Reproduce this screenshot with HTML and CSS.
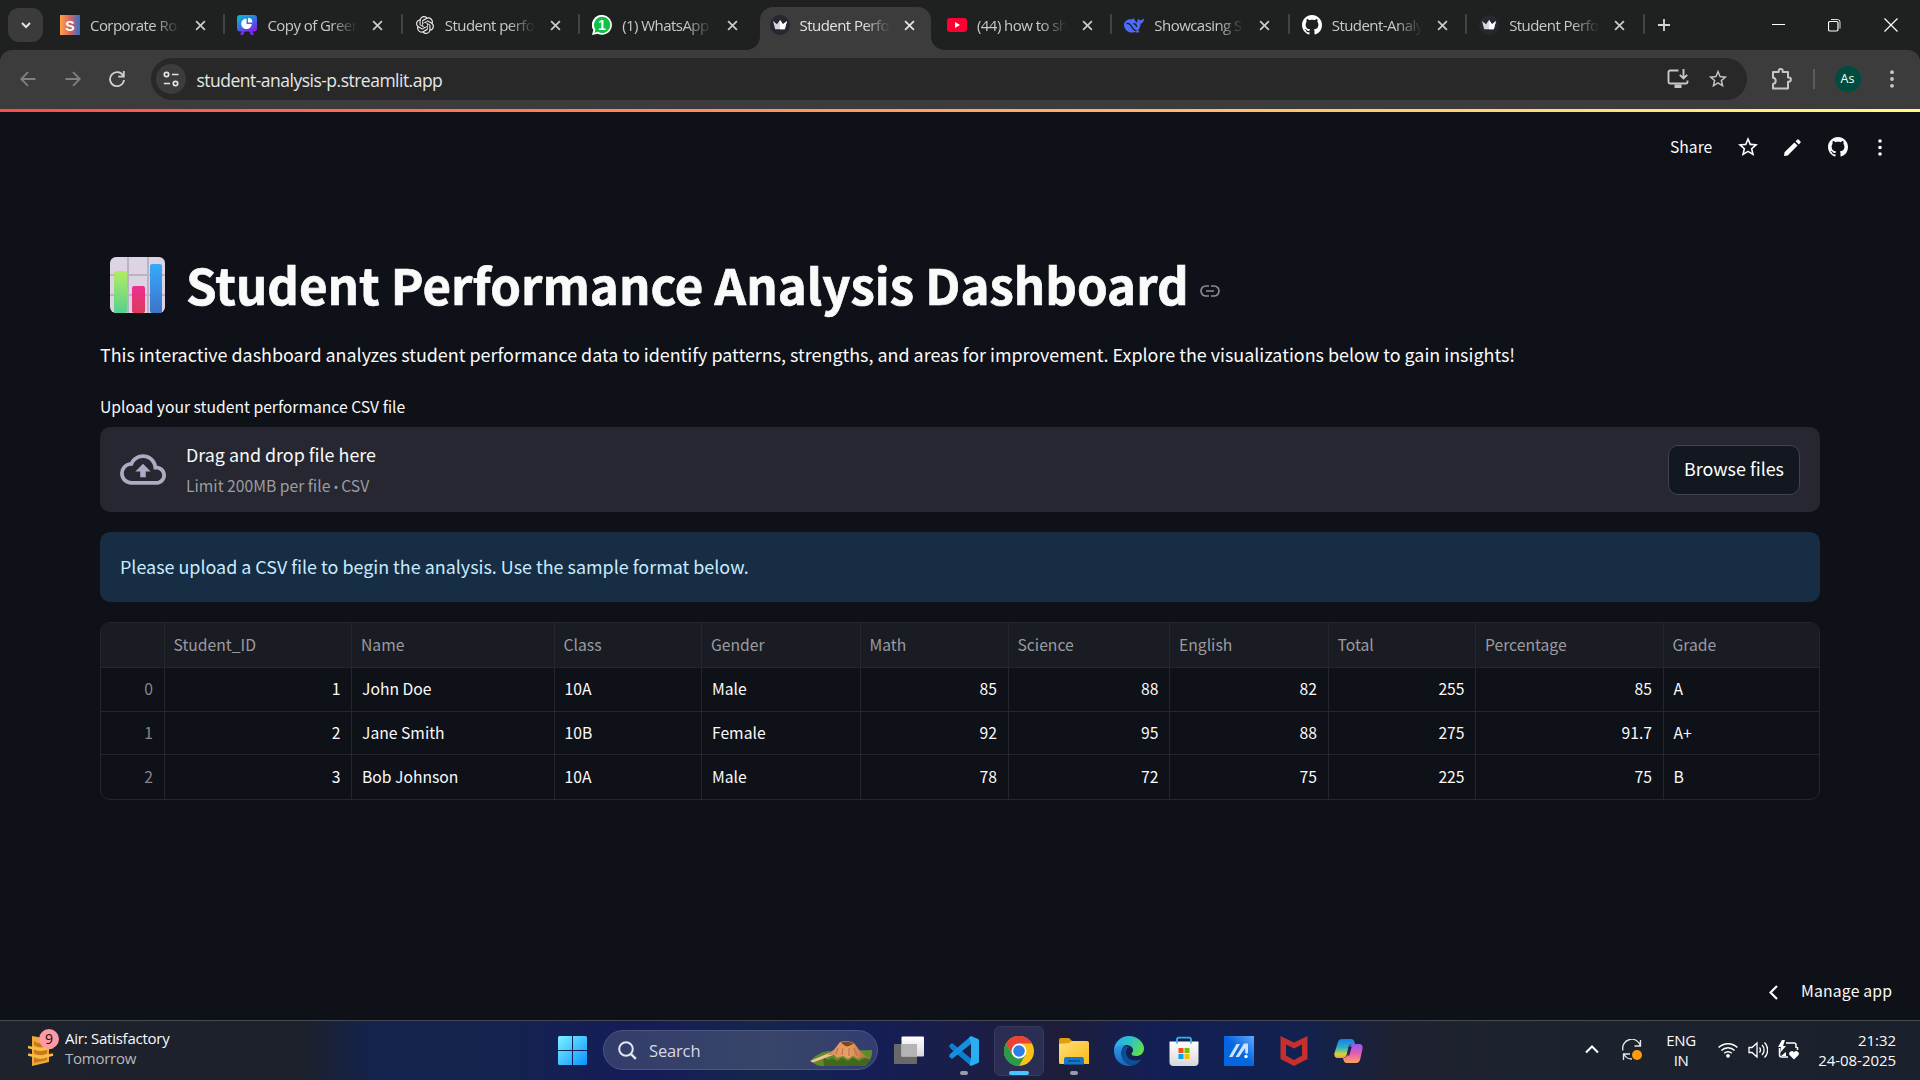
FILE: index.html
```html
<!DOCTYPE html>
<html lang="en">
<head>
<meta charset="utf-8">
<title>Student Performance Analysis Dashboard</title>
<link rel="stylesheet" href="styles.css">
</head>
<body>
<svg class="defs" aria-hidden="true">
  <defs>
    <linearGradient id="g-s" x1="0" x2="1"><stop offset="0" stop-color="#ffa14a"/><stop offset=".5" stop-color="#d9665c"/><stop offset="1" stop-color="#2e6fd0"/></linearGradient>
    <linearGradient id="g-board" x1="0" x2=".6" y1="0" y2="1"><stop offset="0" stop-color="#00c4cc"/><stop offset=".5" stop-color="#2a7fe0"/><stop offset="1" stop-color="#7d2ae8"/></linearGradient>
    <linearGradient id="g-win" x1="0" x2="1" y1="0" y2="1"><stop offset="0" stop-color="#7cf3ff"/><stop offset="1" stop-color="#0a93ff"/></linearGradient>
    <linearGradient id="g-folder" x1="0" x2="1" y1="0" y2="1"><stop offset="0" stop-color="#ffe07a"/><stop offset="1" stop-color="#fdb913"/></linearGradient>
    <linearGradient id="g-edge" x1="0" x2="1" y1=".2" y2=".6"><stop offset="0" stop-color="#2ba8ee"/><stop offset=".5" stop-color="#2cc4c6"/><stop offset="1" stop-color="#62e04a"/></linearGradient>
    <linearGradient id="g-edge2" x1="0" x2="0" y1="0" y2="1"><stop offset="0" stop-color="#2f9ce6"/><stop offset="1" stop-color="#1565c0"/></linearGradient>
    <linearGradient id="g-store" x1="0" x2="0" y1="0" y2="1"><stop offset="0" stop-color="#fff"/><stop offset="1" stop-color="#d8d8da"/></linearGradient>
    <linearGradient id="g-asus" x1="0" x2="1" y1="1" y2="0"><stop offset=".5" stop-color="#0566e0"/><stop offset="1" stop-color="#62a8ff"/></linearGradient>
    <linearGradient id="g-cp1" x1="0" x2="0" y1="0" y2="1"><stop offset="0" stop-color="#1c7be8"/><stop offset=".45" stop-color="#26b3c9"/><stop offset=".8" stop-color="#d8d03a"/><stop offset="1" stop-color="#f0a12c"/></linearGradient>
    <linearGradient id="g-cp2" x1="0" x2="0" y1="0" y2="1"><stop offset="0" stop-color="#8d5cf0"/><stop offset=".5" stop-color="#e45cb4"/><stop offset="1" stop-color="#ffa25c"/></linearGradient>
    <linearGradient id="g-green" x1="0" x2="0" y1="0" y2="1"><stop offset="0" stop-color="#b3ec60"/><stop offset="1" stop-color="#55d191"/></linearGradient>
    <linearGradient id="g-pink" x1="0" x2="0" y1="0" y2="1"><stop offset="0" stop-color="#ee2f92"/><stop offset="1" stop-color="#dc3a5c"/></linearGradient>
    <linearGradient id="g-blue" x1="0" x2="0" y1="0" y2="1"><stop offset="0" stop-color="#36aafb"/><stop offset="1" stop-color="#3c74c8"/></linearGradient>
    <linearGradient id="g-rock" x1="0" x2="1"><stop offset="0" stop-color="#d98e5a"/><stop offset=".5" stop-color="#e8a068"/><stop offset="1" stop-color="#b8683a"/></linearGradient>
    <linearGradient id="g-tv" x1="0" x2="0" y1="0" y2="1"><stop offset="0" stop-color="#fff"/><stop offset="1" stop-color="#d9d9dd"/></linearGradient>
  </defs>
  <symbol id="x" viewBox="0 0 10 10"><path d="M1 1l8 8M9 1L1 9" fill="none" stroke="currentColor" stroke-width="1.6"/></symbol>
  <symbol id="github" viewBox="0 0 16 16"><path fill="currentColor" d="M8 0C3.58 0 0 3.58 0 8c0 3.54 2.29 6.53 5.47 7.59.4.07.55-.17.55-.38 0-.19-.01-.82-.01-1.49-2.01.37-2.53-.49-2.69-.94-.09-.23-.48-.94-.82-1.13-.28-.15-.68-.52-.01-.53.63-.01 1.08.58 1.23.82.72 1.21 1.87.87 2.33.66.07-.52.28-.87.51-1.07-1.78-.2-3.64-.89-3.64-3.95 0-.87.31-1.59.82-2.15-.08-.2-.36-1.02.08-2.12 0 0 .67-.21 2.2.82.64-.18 1.32-.27 2-.27s1.36.09 2 .27c1.53-1.04 2.2-.82 2.2-.82.44 1.1.16 1.92.08 2.12.51.56.82 1.27.82 2.15 0 3.07-1.87 3.75-3.65 3.95.29.25.54.73.54 1.48 0 1.07-.01 1.93-.01 2.2 0 .21.15.46.55.38A8.01 8.01 0 0 0 16 8c0-4.42-3.58-8-8-8z"/></symbol>
  <symbol id="crown" viewBox="0 0 20 20"><circle cx="10" cy="10" r="10" fill="#262730"/><path d="M3 6l4 3.2 3-4.2 3 4.2L17 6l-2.2 8.2H5.2z" fill="#d5d5da"/><path d="M10 5l3 4.2L17 6l-2.2 8.2H10z" fill="#fff"/></symbol>
  <symbol id="star" viewBox="0 0 24 24"><path fill="currentColor" d="M22 9.24l-7.19-.62L12 2 9.19 8.63 2 9.24l5.46 4.73L5.82 21 12 17.27 18.18 21l-1.63-7.03L22 9.24zM12 15.4l-3.76 2.27 1-4.28-3.32-2.88 4.38-.38L12 6.1l1.71 4.04 4.38.38-3.32 2.88 1 4.28L12 15.4z"/></symbol>
  <symbol id="dots" viewBox="0 0 4 18"><g fill="currentColor"><circle cx="2" cy="2.2" r="1.9"/><circle cx="2" cy="9" r="1.9"/><circle cx="2" cy="15.8" r="1.9"/></g></symbol>
</svg>

<div class="browser">
  <div class="tabstrip">
    <div class="tab-search"><svg width="10" height="7" viewBox="0 0 10 7"><path d="M1 1l4 4 4-4" fill="none" stroke="#e3e3e3" stroke-width="2"/></svg></div>
    <div class="tabs">
      <div class="tab"><svg class="fav" viewBox="0 0 20 20"><rect width="20" height="20" fill="url(#g-s)"/><text x="10" y="15.5" text-anchor="middle" class="fav-s">S</text></svg><span>Corporate Ro</span><svg class="close"><use href="#x"/></svg></div>
      <div class="tab"><svg class="fav" viewBox="0 0 20 20"><path d="M7 14l-2.500 6M13 14l2.500 6" stroke="#7d2ae8" stroke-width="3"/><rect width="20" height="16.5" rx="3" fill="url(#g-board)"/><path d="M9.500 3.500a5.300 5.300 0 1 0 5.300 5.500H9.500z" fill="#fff"/><path d="M11 2.800a4.800 4.800 0 0 1 4.400 4.700H11z" fill="#fff"/></svg><span>Copy of Green</span><svg class="close"><use href="#x"/></svg></div>
      <div class="tab"><svg class="fav openai" viewBox="0 0 24 24"><path fill="#e8e8e8" d="M22.2819 9.8211a5.9847 5.9847 0 0 0-.5157-4.9108 6.0462 6.0462 0 0 0-6.5098-2.9A6.0651 6.0651 0 0 0 4.9807 4.1818a5.9847 5.9847 0 0 0-3.9977 2.9 6.0462 6.0462 0 0 0 .7427 7.0966 5.98 5.98 0 0 0 .511 4.9107 6.051 6.051 0 0 0 6.5146 2.9001A5.9847 5.9847 0 0 0 13.2599 24a6.0557 6.0557 0 0 0 5.7718-4.2058 5.9894 5.9894 0 0 0 3.9977-2.9001 6.0557 6.0557 0 0 0-.7475-7.0729zm-9.022 12.6081a4.4755 4.4755 0 0 1-2.8764-1.0408l.1419-.0804 4.7783-2.7582a.7948.7948 0 0 0 .3927-.6813v-6.7369l2.02 1.1686a.071.071 0 0 1 .038.052v5.5826a4.504 4.504 0 0 1-4.4945 4.4944zm-9.6607-4.1254a4.4708 4.4708 0 0 1-.5346-3.0137l.142.0852 4.783 2.7582a.7712.7712 0 0 0 .7806 0l5.8428-3.3685v2.3324a.0804.0804 0 0 1-.0332.0615L9.74 19.9502a4.4992 4.4992 0 0 1-6.1408-1.6464zM2.3408 7.8956a4.485 4.485 0 0 1 2.3655-1.9728V11.6a.7664.7664 0 0 0 .3879.6765l5.8144 3.3543-2.0201 1.1685a.0757.0757 0 0 1-.071 0l-4.8303-2.7865A4.504 4.504 0 0 1 2.3408 7.872zm16.5963 3.8558L13.1038 8.364 15.1192 7.2a.0757.0757 0 0 1 .071 0l4.8303 2.7913a4.4944 4.4944 0 0 1-.6765 8.1042v-5.6772a.79.79 0 0 0-.407-.667zm2.0107-3.0231l-.142-.0852-4.7735-2.7818a.7759.7759 0 0 0-.7854 0L9.409 9.2297V6.8974a.0662.0662 0 0 1 .0284-.0615l4.8303-2.7866a4.4992 4.4992 0 0 1 6.6802 4.66zM8.3065 12.863l-2.02-1.1638a.0804.0804 0 0 1-.038-.0567V6.0742a4.4992 4.4992 0 0 1 7.3757-3.4537l-.142.0805L8.704 5.459a.7948.7948 0 0 0-.3927.6813zm1.0976-2.3654l2.602-1.4998 2.6069 1.4998v2.9994l-2.5974 1.4997-2.6067-1.4997Z"/></svg><span>Student perfo</span><svg class="close"><use href="#x"/></svg></div>
      <div class="tab nosep"><svg class="fav" viewBox="0 0 20 20"><path d="M10 0a10 9.900 0 1 1-4.500 18.800L0 20l1.300-5A9.900 9.900 0 0 1 10 0z" fill="#fff"/><path d="M10 1.800a8.100 8.100 0 1 1-4.100 15l-3.400.9.9-3.300A8.100 8.100 0 0 1 10 1.800z" fill="#0fc144"/><text x="10" y="15" text-anchor="middle" class="fav-n">1</text></svg><span>(1) WhatsApp</span><svg class="close"><use href="#x"/></svg></div>
      <div class="tab active nosep"><svg class="fav"><use href="#crown"/></svg><span>Student Perfo</span><svg class="close"><use href="#x"/></svg></div>
      <div class="tab"><svg class="fav" viewBox="0 0 20 20"><rect y="3" width="20" height="14" rx="3" fill="#ff0033"/><path d="M8 7l5 3-5 3z" fill="#fff"/></svg><span>(44) how to sh</span><svg class="close"><use href="#x"/></svg></div>
      <div class="tab"><svg class="fav" viewBox="0 0 20 20"><path d="M0 9.500C.5 5.500 4.500 3.500 8 4.300c.8-.9 1.500-1 2.300-.8C10 5 11.500 6 13 8c.2-2 .4-3.200 1.600-4.500.2 1.300.8 1.900 1.900 1.700 1.300-.3 2.300-.8 3.500-1.600-.1 2.900-1.200 4.400-3.300 5.200-.3 3-1.200 5-2.700 6.600l1.800 1.700c-1.900.8-3.500.6-4.900-.1C5.500 19 0 15.500 0 9.500z" fill="#4d6bfe"/><path d="M2.500 8.500c2.500-.5 4 1 5 3s2.500 4 5 4.300M9.500 8.500c2 .3 3 1.800 3.200 3.500" stroke="#1f2120" stroke-width="1.300" fill="none"/></svg><span>Showcasing S</span><svg class="close"><use href="#x"/></svg></div>
      <div class="tab"><svg class="fav white"><use href="#github"/></svg><span>Student-Analy</span><svg class="close"><use href="#x"/></svg></div>
      <div class="tab"><svg class="fav"><use href="#crown"/></svg><span>Student Perfo</span><svg class="close"><use href="#x"/></svg></div>
    </div>
    <svg class="plus" viewBox="0 0 12 12"><path d="M6 0v12M0 6h12" stroke="#d5d5d5" stroke-width="1.800"/></svg>
    <div class="window-controls">
      <svg width="13" height="13"><path d="M0 5.500h13" stroke="#fff"/></svg>
      <svg width="13" height="14"><path d="M3 1.500h6.500a2.500 2.500 0 0 1 2.500 2.500v6.500" stroke="#ddd" fill="none"/><rect x=".5" y="3.500" width="9.500" height="9.500" rx="1.500" fill="none" stroke="#fff" stroke-width="1.200"/></svg>
      <svg width="14" height="14"><path d="M.5.5l13 13M13.500.5l-13 13" stroke="#fff" stroke-width="1.200"/></svg>
    </div>
  </div>

  <div class="toolbar">
    <svg class="nav dim" viewBox="0 0 16 16"><path d="M15.500 8H1.500M8 1.200L1.200 8 8 14.800"/></svg>
    <svg class="nav dim" viewBox="0 0 16 16"><path d="M.5 8h14M8 1.200L14.800 8 8 14.800"/></svg>
    <svg class="nav" viewBox="0 0 16 16"><path d="M14 4.500A7 7 0 1 0 15 9M14.800 0v5.600H9.200"/></svg>
    <div class="omnibox">
      <span class="site-chip"><svg width="16" height="16" viewBox="0 0 16 16" fill="none" stroke="#e3e3e3" stroke-width="1.700"><circle cx="3.500" cy="3.500" r="2.200"/><path d="M9 3.500h6.500M.8 12.500H7"/><circle cx="12.500" cy="12.500" r="2.200"/></svg></span>
      <span class="url">student-analysis-p.streamlit.app</span>
      <svg class="install" width="22" height="20" viewBox="0 0 22 20" fill="none" stroke="#c7c7c7" stroke-width="1.900"><path d="M11.500 1.500H3A1.500 1.500 0 0 0 1.500 3v10A1.500 1.500 0 0 0 3 14.500h16a1.500 1.500 0 0 0 1.500-1.500v-1.500M16.500 0v9M12.800 5.800l3.700 3.700 3.700-3.700"/><path d="M7.500 15.500h7V19h-7z" fill="#c7c7c7" stroke="none"/></svg>
      <svg class="bookmark"><use href="#star"/></svg>
    </div>
    <svg class="ext" width="22" height="22" viewBox="0 0 22 22" fill="none" stroke="#c7c7c7" stroke-width="2"><path d="M3 4h4.700V3a2 2 0 0 1 4 0v1H17v5.500h.8a2 2 0 0 1 0 4.200H17V20.500H2v-4.500c3.600-.3 3.600-6 0-6.300V4z" stroke-linejoin="round"/></svg>
    <i class="bar"></i>
    <span class="avatar">As</span>
    <svg class="menu"><use href="#dots"/></svg>
  </div>
</div>

<main class="app">
  <header class="app-header">
    <span>Share</span>
    <svg class="h-star"><use href="#star"/></svg>
    <svg class="h-pen" viewBox="0 0 16 16"><path d="M0 16l.5-3.500L9.800 3.200l3 3L3.500 15.500zM10.900 2.100L12.300.7a1.200 1.200 0 0 1 1.700 0l1.300 1.300a1.200 1.200 0 0 1 0 1.700l-1.400 1.400z" fill="#fff"/></svg>
    <svg class="h-git"><use href="#github"/></svg>
    <svg class="h-dots"><use href="#dots"/></svg>
  </header>

  <div class="content">
    <h1>
      <svg class="chart" viewBox="0 0 55 56"><rect width="55" height="56" rx="6" fill="#dcd4e2"/><path d="M18 0v56M38 0v56M0 18h55M0 38h55" stroke="#bbb3c2" stroke-width="2"/><rect x="4" y="14" width="13" height="42" rx="2" fill="url(#g-green)"/><rect x="22" y="29" width="13" height="27" rx="2" fill="url(#g-pink)"/><rect x="40" y="7" width="12" height="49" rx="2" fill="url(#g-blue)"/></svg>
      <span>Student Performance Analysis Dashboard</span>
      <svg class="link" viewBox="0 0 20 12" fill="none" stroke="#8b8d93" stroke-width="1.700"><path d="M9 1H6a5 5 0 0 0 0 10h3M11 1h3a5 5 0 0 1 0 10h-3M6 6h8"/></svg>
    </h1>
    <p class="intro">This interactive dashboard analyzes student performance data to identify patterns, strengths, and areas for improvement. Explore the visualizations below to gain insights!</p>
    <label class="upload-label">Upload your student performance CSV file</label>
    <section class="uploader">
      <svg class="cloud" viewBox="0 4 24 16"><path fill="#a9adc1" d="M19.350 10.040A7.490 7.490 0 0012 4C9.110 4 6.600 5.640 5.350 8.040A5.994 5.994 0 000 14c0 3.310 2.690 6 6 6h13c2.760 0 5-2.240 5-5 0-2.640-2.050-4.780-4.650-4.960zM19 18H6c-2.210 0-4-1.790-4-4s1.790-4 4-4h.710C7.370 7.690 9.480 6 12 6c3.040 0 5.500 2.460 5.500 5.500v.5H19c1.660 0 3 1.340 3 3s-1.340 3-3 3zM8 13h2.550v3h2.900v-3H16l-4-4z"/></svg>
      <div class="drop"><span>Drag and drop file here</span><small>Limit 200MB per file <b>•</b> CSV</small></div>
      <button>Browse files</button>
    </section>
    <div class="info">Please upload a CSV file to begin the analysis. Use the sample format below.</div>
    <div class="grid">
      <div class="row head"><span></span><span>Student_ID</span><span>Name</span><span>Class</span><span>Gender</span><span>Math</span><span>Science</span><span>English</span><span>Total</span><span>Percentage</span><span>Grade</span></div>
      <div class="row"><span class="idx">0</span><span class="num">1</span><span>John Doe</span><span>10A</span><span>Male</span><span class="num">85</span><span class="num">88</span><span class="num">82</span><span class="num">255</span><span class="num">85</span><span>A</span></div>
      <div class="row"><span class="idx">1</span><span class="num">2</span><span>Jane Smith</span><span>10B</span><span>Female</span><span class="num">92</span><span class="num">95</span><span class="num">88</span><span class="num">275</span><span class="num">91.7</span><span>A+</span></div>
      <div class="row"><span class="idx">2</span><span class="num">3</span><span>Bob Johnson</span><span>10A</span><span>Male</span><span class="num">78</span><span class="num">72</span><span class="num">75</span><span class="num">225</span><span class="num">75</span><span>B</span></div>
    </div>
  </div>
  <footer class="manage"><svg width="9" height="15" viewBox="0 0 9 15"><path d="M8 1L1.500 7.500 8 14" fill="none" stroke="#fff" stroke-width="2.200"/></svg><span>Manage app</span></footer>
</main>

<div class="taskbar">
  <div class="weather">
    <svg width="32" height="38" viewBox="0 0 32 38"><path d="M4 7l17 3v23L4 37z" fill="#f2a93b"/><path d="M6 12c4 3 9 3 13 0v4c-4 3-9 3-13 0zM6 20c4 3 9 3 13 0v4c-4 3-9 3-13 0zM6 28c4 3 9 3 13 0v3L6 34z" fill="#c47a18"/><path d="M0 18c8 3 16 3 25 0M0 25.500c8 3 16 3 25 0" stroke="#f9bd4a" stroke-width="2.500" fill="none"/><circle cx="21" cy="10" r="10" fill="#ff99a4"/><text x="21" y="15" text-anchor="middle" class="badge-n">9</text></svg>
    <div class="lines"><span>Air: Satisfactory</span><span class="sub">Tomorrow</span></div>
  </div>
  <div class="apps">
    <svg class="start" viewBox="0 0 29 29"><path d="M1.500 0H14v14H0V1.500A1.500 1.500 0 0 1 1.500 0zM15 0h12.500A1.500 1.500 0 0 1 29 1.500V14H15zM0 15h14v14H1.500A1.500 1.500 0 0 1 0 27.500zM15 15h14v12.500a1.500 1.500 0 0 1-1.500 1.500H15z" fill="url(#g-win)"/></svg>
    <div class="search">
      <svg width="19" height="19" viewBox="0 0 19 19" fill="none" stroke="#e4e6ee" stroke-width="2"><circle cx="8" cy="8" r="6.800"/><path d="M12.800 12.800l5 5" stroke-width="2.500"/></svg>
      <span>Search</span>
      <svg class="crater" width="63" height="26" viewBox="0 0 63 26"><path d="M1 19C6 14 13 10 20 10l42-1c1 6-3 14-9 16H13C8 25 3 23 1 19z" fill="#5f8a2a"/><path d="M13 16l5 3 4-2 5 3 5-3 6 3 5-3 6 3 6-3 5 2-4 6H14z" fill="#41681c"/><path d="M0 20L19 12l4 2L3 21.500z" fill="#efc09a"/><path d="M17 14C23 11 27 5 30 1c4-1 10-1 14 1 4 5 8 12 15 15l-7-1-4 2-5-3-5 3-5-3-6 2-3-3z" fill="url(#g-rock)"/><path d="M31 1.500c4-1.500 9-1 13 1l-6 3c-3 0-5-2-7-4z" fill="#7d4424"/><path d="M28 7l-2 6M33 7l-1 7M39 7v8M44 7l3 8" stroke="#b87040" fill="none"/></svg>
    </div>
    <div class="app-icon"><svg viewBox="0 0 30 30"><rect x="0" y="8" width="23" height="20" rx="1" fill="#696969"/><rect x="7.500" y="0.500" width="22.500" height="20" rx="1" fill="url(#g-tv)"/><rect x="7.500" y="8" width="15.500" height="12.500" fill="#b4b4b6"/></svg></div>
    <div class="app-icon run"><svg viewBox="0 0 30 30"><path d="M0 9.500L3 7l19 15.500V30L1 12z" fill="#0a7fd4"/><path d="M0 20.500L3 23 22 8V0L1 18z" fill="#1590de"/><path d="M22 0l6.500 2.800a2 2 0 0 1 1.500 2v20.500a2 2 0 0 1-1.500 2L22 30l-1.500-1.500 1.500-6V8l-2-6z" fill="#29aef2"/></svg></div>
    <div class="app-icon current run"><svg viewBox="0 0 30 30"><circle cx="15" cy="15" r="15" fill="#fbc116"/><path d="M2 7.500A15 15 0 0 1 28 7.500H15L8.500 18.700z" fill="#ea4335"/><path d="M2 7.500A15 15 0 0 0 15 30l6.500-11.200H8.500z" fill="#2a9a48"/><circle cx="15" cy="15" r="7.500" fill="#fff"/><circle cx="15" cy="15" r="5.800" fill="#2f7de9"/></svg></div>
    <div class="app-icon run"><svg viewBox="0 0 30 30"><path d="M0 4a2 2 0 0 1 2-2h8l3 3v6H0z" fill="#e0a00c"/><path d="M0 8l10-1 3-2h15a2 2 0 0 1 2 2v21H1.500A1.500 1.500 0 0 1 0 26.500z" fill="url(#g-folder)"/><path d="M5 28.500V23a2 2 0 0 1 2-2h16a2 2 0 0 1 2 2v5.500z" fill="#1377cf"/><path d="M9 25h12" stroke="#0d4f94" stroke-width="1.500"/></svg></div>
    <div class="app-icon"><svg viewBox="0 0 30 30"><path d="M0 15C0 6 7 0 15 0s15 6 15 12.500c0 5-4 7.500-8 7.500-3 0-4.500-1-4.500-2s1.500-1.500 1.500-4-2.500-5-7-5C6 9 1 11 0 15z" fill="url(#g-edge)"/><path d="M0 15C1 10 6 8 12 9c-3 1-5 5-4.500 9 .5 7 6 11 11.500 11.500C9 32 0 25 0 15z" fill="url(#g-edge2)"/><path d="M12 10c-4 2-5.500 6-4.500 10 1.500 6 7 9.500 11.500 9.500 3-.8 6-2.500 8.500-6.500-7 3.500-15 .5-15.500-6C12 14 13 12 15 11z" fill="#0d4f94"/></svg></div>
    <div class="app-icon"><svg viewBox="0 0 30 30"><path d="M.5 5.500h29V26a4 4 0 0 1-4 4h-21a4 4 0 0 1-4-4z" fill="url(#g-store)"/><path d="M8 7.500V3.500A1.800 1.800 0 0 1 9.800 1.700h10.400A1.800 1.800 0 0 1 22 3.500v4" fill="none" stroke="#35b6e8" stroke-width="1.800"/><path d="M9.500 12h5v5h-5z" fill="#f25022"/><path d="M15.500 12h5v5h-5z" fill="#7fba00"/><path d="M9.500 18h5v5h-5z" fill="#00a4ef"/><path d="M15.500 18h5v5h-5z" fill="#ffb900"/></svg></div>
    <div class="app-icon"><svg viewBox="0 0 30 30"><path d="M0 0h30v30H0z" fill="url(#g-asus)"/><path d="M5 21L12.500 8H16L8.500 21zM11.500 21L20 7.500h4v10h-2.800v-5.500L15 21z" fill="#cfe2ff"/><circle cx="22" cy="20.500" r="1.700" fill="#fff"/></svg></div>
    <div class="app-icon"><svg viewBox="0 0 30 30"><path d="M1.500 0L15 6.500 28.500 0v23L15 30 1.500 23zM7 8.500v11L15 24l8-4.500v-11L15 12.500z" fill="#c3302f"/></svg></div>
    <div class="app-icon"><svg viewBox="0 0 30 30"><path d="M8 3h9c2 0 3 1 3.500 3l.5 2h-3c-2 0-3 1-3.500 3l-2 8c-.5 2-2 3-4 3H4c-3 0-4-2-3.500-5L4 6c.6-2 2-3 4-3z" fill="url(#g-cp1)"/><path d="M22 27h-9c-2 0-3-1-3.500-3L9 22c2.500 0 3.500-1 4-3l2-8c.5-2 2-3 4-3h6c3 0 4 2 3.500 5L26 24c-.6 2-2 3-4 3z" fill="url(#g-cp2)"/><path d="M14.800 10.500h3l-2.600 9H13z" fill="#1c2150"/></svg></div>
  </div>
  <div class="tray">
    <svg class="t-up" width="14" height="9" viewBox="0 0 14 9"><path d="M1 7.500l6-6 6 6" fill="none" stroke="#fff" stroke-width="2"/></svg>
    <svg class="t-sync" width="21" height="22" viewBox="0 0 21 22" fill="none" stroke="#e6e6e6" stroke-width="1.300"><path d="M1 11.500A9 9 0 0 1 18.500 7M18.500 1v6h-6M10 20A9 9 0 0 1 2 15.500M8 15H1.500v6"/><circle cx="15" cy="16" r="5" fill="#ff9a0c" stroke="none"/></svg>
    <div class="lang"><span>ENG</span><span>IN</span></div>
    <svg class="t-wifi" width="20" height="16" viewBox="0 0 20 16" fill="none" stroke="#fff" stroke-width="1.400"><path d="M.6 5.600a13.300 13.300 0 0 1 18.800 0M3.400 8.500a9.300 9.300 0 0 1 13.200 0M6.200 11.300a5.300 5.300 0 0 1 7.600 0"/><circle cx="10" cy="13.800" r="1.900" fill="#fff" stroke="none"/></svg>
    <svg class="t-vol" width="20" height="18" viewBox="0 0 20 18" fill="none" stroke="#fff" stroke-width="1.300"><path d="M1 6.500h3L9 2v14l-5-4.500H1zM11.500 6.500a4 4 0 0 1 0 5M14 4a7 7 0 0 1 0 10M16.500 1.500a10.500 10.500 0 0 1 0 15"/></svg>
    <svg class="t-bat" width="21" height="20" viewBox="0 0 21 20" fill="none" stroke="#fff" stroke-width="1.500"><path d="M8 3h8a2 2 0 0 1 2 2v3M1.500 8v7a2 2 0 0 0 2 2H10M19.500 7v3"/><path d="M4 0L0 7h3l-1 6 6-7H5l2-6z" fill="#fff" stroke="none"/><path d="M8 12v4H3z" fill="#fff" stroke="none"/><path d="M16 19.500l-4.500-4.500a2.500 2.500 0 0 1 4.500-2.500 2.500 2.500 0 0 1 4.500 2.500z" fill="#fff" stroke="none"/></svg>
    <div class="clock"><span>21:32</span><span>24-08-2025</span></div>
  </div>
</div>
</body>
</html>
```
FILE: styles.css
```css
* { box-sizing: border-box; }
body {
  margin: 0;
  width: 1920px;
  height: 1080px;
  overflow: hidden;
  display: flex;
  flex-direction: column;
  background: #0e1117;
  color: #fafafa;
  font-family: "Noto Sans CJK SC", sans-serif;
}
svg { display: block; flex: none; }
.defs { position: absolute; width: 0; height: 0; }

/* Browser frame */
.browser {
  font-family: "Open Sans", "Noto Sans", sans-serif;
  height: 109px;
  background: #1f2120;
}
.tabstrip { display: flex; height: 50px; align-items: center; padding-left: 8px; }
.tab-search {
  width: 35px; height: 34px; border-radius: 11px; background: #3b3b3b;
  display: flex; align-items: center; justify-content: center;
}
.tabs { display: flex; align-self: stretch; margin-left: 4px; }
.tab {
  width: 177.400px; display: flex; align-items: center; padding: 0 19.500px 0 13px;
  position: relative; font-size: 15px; color: #c9c9c9;
}
.tab::after {
  content: ""; position: absolute; right: -1px; top: 14px; width: 2px; height: 20px;
  background: #444; border-radius: 1px;
}
.tab.nosep::after { display: none; }
.tab span {
  margin-left: 10px; width: 96px; margin-right: -6px; white-space: nowrap; letter-spacing: -.55px;
  mask-image: linear-gradient(90deg, #000 66%, transparent 94%);
}
.fav { width: 20px; height: 20px; }
.openai { width: 18px; height: 18px; margin: 0 1px; }
.white { color: #fff; }
.fav-s { font: bold 14px "Liberation Sans", sans-serif; fill: #fff; }
.fav-n { font: bold 14px "Liberation Sans", sans-serif; fill: #fff; }
.close { width: 11px; height: 11px; margin-left: auto; margin-right: -1px; }
.active { color: #e3e3e3; z-index: 0; }
.active::before {
  content: ""; position: absolute; z-index: -1; inset: 7px 3px 0 3px;
  background: #3c3c3c; border-radius: 13px 13px 0 0;
}
.active.nosep::after {
  content: ""; display: block; position: absolute; z-index: -1; left: -10px; right: -10px; top: auto; bottom: 0;
  width: auto; height: 13px; border-radius: 0;
  background:
    radial-gradient(circle at 0 0, transparent 12.500px, #3c3c3c 13px) left / 13px 13px no-repeat,
    radial-gradient(circle at 100% 0, transparent 12.500px, #3c3c3c 13px) right / 13px 13px no-repeat;
}
.plus { width: 12px; height: 12px; margin-left: 14px; }
.window-controls { display: flex; align-items: center; gap: 43px; margin-left: auto; padding-right: 22px; }
.toolbar {
  height: 59px; background: #3c3c3c; border-radius: 12px 12px 0 0;
  display: flex; align-items: center; padding: 0 26px 1px 20px;
}
.nav { width: 16px; height: 16px; fill: none; stroke: #d0d0d0; stroke-width: 1.800; margin-right: 28.500px; }
.nav.dim { stroke: #808080; }
.omnibox {
  width: 1596px; height: 42px; margin-left: -3px; background: #282828; border-radius: 21px;
  display: flex; align-items: center; padding: 0 18px 0 5px;
}
.site-chip {
  width: 30px; height: 30px; border-radius: 50%; background: #3c3c3c;
  display: flex; align-items: center; justify-content: center;
}
.url { margin-left: 11px; font-size: 17.500px; letter-spacing: -.51px; color: #e6e6e6; padding-top: 1px; }
.install { margin-left: auto; }
.bookmark { width: 22px; height: 22px; margin-left: 18px; color: #c7c7c7; }
.ext { margin-left: 24px; }
.bar { width: 2px; height: 20px; background: #5c5c5c; margin-left: 20px; }
.avatar {
  width: 26px; height: 26px; margin-left: 20px; border-radius: 50%; background: #004d40;
  font-size: 12.500px; line-height: 26px; text-align: center; color: #fff;
}
.menu { width: 4px; height: 18px; color: #c7c7c7; margin-left: auto; }

/* App page */
.app {
  height: 911px; display: flex; flex-direction: column;
  border-top: 3px solid;
  border-image: linear-gradient(90deg, #ff4b4b, #fffd80) 1;
}
.app-header {
  display: flex; align-items: center; height: 72px; padding: 0 38px 2px 1670px;
  font-size: 15.700px; line-height: 24px;
}
.h-star { width: 24px; height: 24px; margin-left: 24px; }
.h-pen { width: 17px; height: 17px; margin-left: 24px; }
.h-git { width: 20px; height: 20px; margin-left: 27px; }
.h-dots { width: 4px; height: 17px; margin-left: auto; }
.content { padding: 0 100px; display: flex; flex-direction: column; }
h1 {
  margin: 55px 0 0; height: 92px; display: flex; align-items: center; padding-left: 10px;
  font-size: 49.200px; line-height: 66px; font-weight: 700; white-space: nowrap;
}
.chart { width: 55px; height: 56px; }
h1 span { margin-left: 21px; padding-bottom: 2px; -webkit-text-stroke: .7px #fafafa; }
.link { width: 20px; height: 12px; margin: 11px 0 0 11px; }
.intro { margin: 8px 0 0; font-size: 17.910px; line-height: 30px; white-space: nowrap; }
.upload-label { margin-top: 25px; font-size: 15.700px; line-height: 26px; }
.uploader {
  margin-top: 7px; height: 85px; padding: 0 20px; border-radius: 10px; background: #262730;
  display: flex; align-items: center;
}
.cloud { width: 46px; height: 31px; }
.drop { margin-left: 20px; display: flex; flex-direction: column; font-size: 17.900px; line-height: 31px; }
.drop small { font-size: 15.700px; color: #9c9da2; }
.drop b { font: 13px/1 "Noto Sans", sans-serif; margin: 0 -.5px; }
button {
  margin-left: auto; width: 132px; height: 50px; border: 1px solid #41444c; border-radius: 10px;
  background: #131720; color: #fff; font: 17.900px/30px "Noto Sans CJK SC", sans-serif; padding: 0 0 3px;
  white-space: nowrap;
}
.info {
  margin-top: 20px; height: 70px; padding: 0 20px 3px; border-radius: 10px; background: #172d43; color: #c7ebff;
  display: flex; align-items: center; font-size: 17.910px;
}
.grid {
  margin-top: 20px; height: 178px; border: 1px solid #25272e; border-radius: 10px; overflow: hidden;
  font-size: 15.700px; line-height: 24px;
}
.row {
  display: grid; height: 43.700px;
  grid-template-columns: 63.500px 187.500px 202.500px 147.500px 158.500px 148px 161.500px 158.500px 147.500px 187.500px 1fr;
}
.row span {
  display: flex; align-items: center; padding: 0 10px 1px;
  border-right: 1px solid #25272e; border-bottom: 1px solid #25272e;
}
.row span:last-child { border-right: 0; }
.row:last-child span { border-bottom: 0; }
.head { height: 45px; background: #1a1c24; color: #9a9b9f; }
.row.head span { padding-left: 9px; }
.row .num, .row .idx { justify-content: flex-end; padding-right: 10.500px; }
.row .idx { color: #85868b; }
.manage {
  margin-top: auto; height: 56px; padding: 0 30px 0 0; display: flex; justify-content: flex-end; align-items: center;
  gap: 23px; font-size: 15.700px; line-height: 26px;
}
.manage span { width: 89px; padding-bottom: 2px; font-size: 15.750px; letter-spacing: .18px; white-space: nowrap; }

/* Taskbar */
.taskbar {
  height: 60px; border-top: 1px solid #46484f; display: flex; align-items: center; position: relative;
  font-family: "Open Sans", "Noto Sans", sans-serif;
  background: linear-gradient(90deg, #1d222b 0, #1c212b 300px, #14234d 375px, #14234f 500px, #151c59 640px, #15264c 760px, #141f57 860px, #1c1d42 1000px, #1e1e3a 1060px, #131f55 1150px, #12214f 1300px, #1f2131 1400px, #1d232e 1500px, #1b212c 100%);
}
.weather { display: flex; width: 528px; padding: 0 0 5px 28px; gap: 5px; align-items: center; }
.lines { display: flex; flex-direction: column; font-size: 15px; line-height: 20px; letter-spacing: -.25px; }
.sub { color: #b5b8be; }
.badge-n { font-size: 14px; fill: #111; }
.apps { display: flex; align-items: center; }
.start { width: 29px; height: 29px; margin-left: 30px; }
.search {
  width: 275px; height: 40px; margin: 0 6px 1px 16px; border-radius: 20px; border: 1px solid #4d5580;
  background: linear-gradient(90deg, #333d6c, #384468 60%, #333d70); display: flex; align-items: center;
  padding: 0 3px 0 14px; font-size: 16.500px; color: #d6d9e4;
}
.search span { margin-left: 12px; letter-spacing: -.15px; }
.crater { margin: 8px 1px 0 auto; }
.app-icon {
  width: 50px; height: 50px; margin-right: 5px; border-radius: 6px; position: relative;
  display: flex; align-items: center; justify-content: center;
}
.app-icon svg { width: 30px; height: 30px; }
.current { background: #2a2e52; border: 1px solid #373a5c; }
.run::after {
  content: ""; position: absolute; bottom: 1px; left: 21px; width: 8px; height: 4px; border-radius: 2px; background: #9a9ba8;
}
.current.run::after { left: 14px; bottom: 0; width: 20px; background: #4cc2ff; }
.tray { margin-left: auto; display: flex; align-items: center; padding: 0 24px 2px 0; font-size: 15px; line-height: 20px; }
.t-sync { margin-left: 23px; }
.lang { margin-left: 22px; width: 32px; display: flex; flex-direction: column; align-items: center; letter-spacing: -.4px; }
.t-wifi { margin-left: 21px; }
.t-vol { margin-left: 10px; }
.t-bat { margin-left: 10px; }
.clock { margin-left: 17px; width: 80px; display: flex; flex-direction: column; align-items: flex-end; letter-spacing: -.05px; white-space: nowrap; }
```
